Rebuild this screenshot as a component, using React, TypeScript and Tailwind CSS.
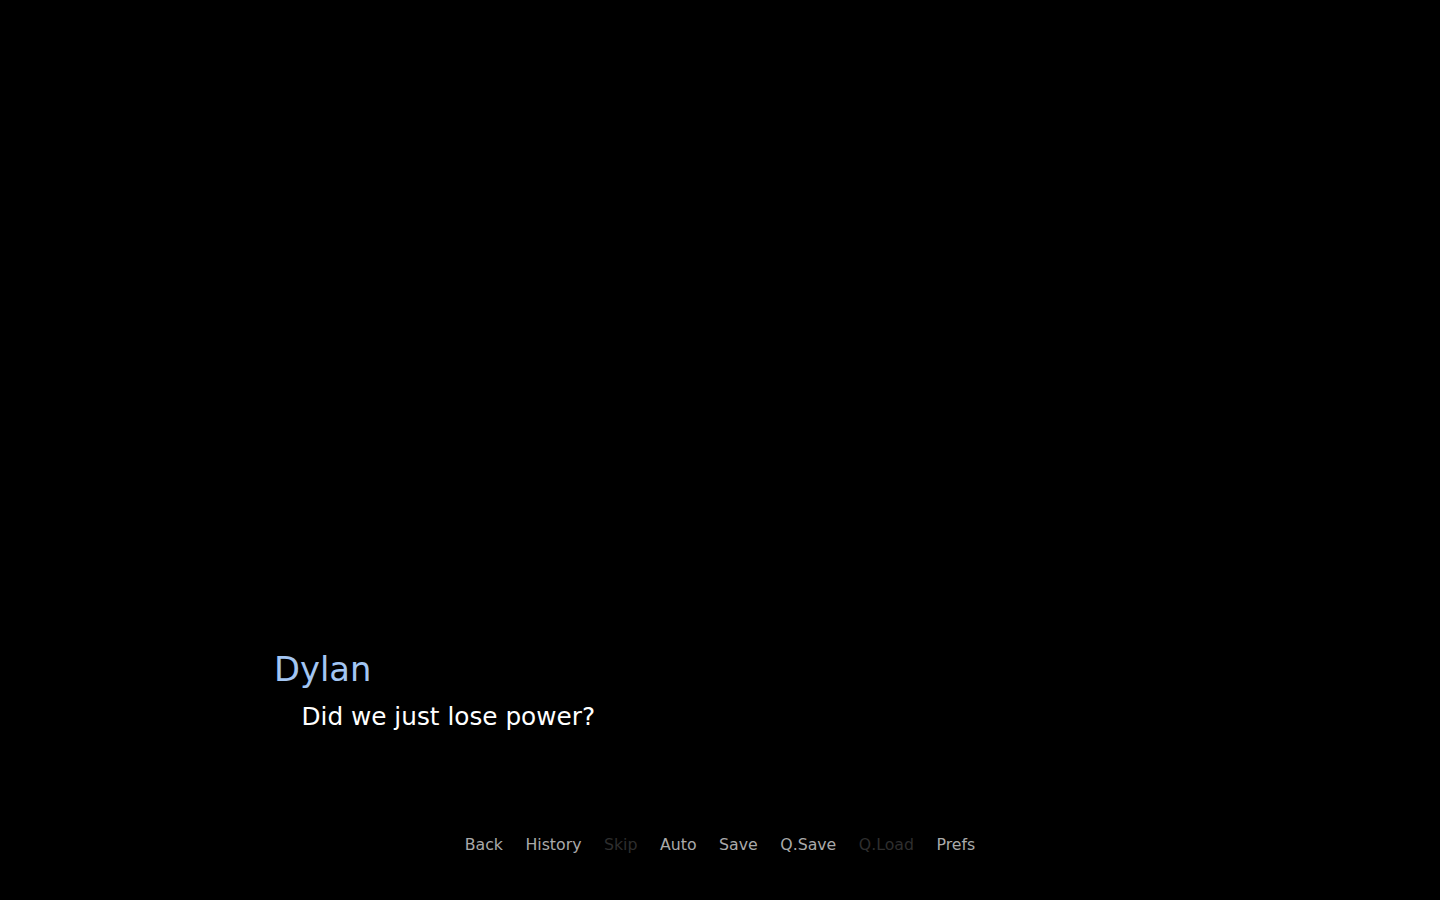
import React from "react";

const items: { label: string; dim?: boolean }[] = [
  { label: "Back" },
  { label: "History" },
  { label: "Skip", dim: true },
  { label: "Auto" },
  { label: "Save" },
  { label: "Q.Save" },
  { label: "Q.Load", dim: true },
  { label: "Prefs" },
];

export default function App() {
  return (
    <div className="w-[1440px] h-[900px] bg-black overflow-hidden font-['DejaVu_Sans',sans-serif] flex flex-col">
      <div className="pt-[650px] pl-[274px] text-[33.75px] leading-[39.3px] text-[#a3c6f3] whitespace-nowrap">
        Dylan
      </div>
      <div className="mt-[13.7px] pl-[301.5px] text-[24.75px] leading-[28.8px] text-white whitespace-nowrap">
        Did we just lose power?
      </div>
      <div className="mt-[104px] flex justify-center text-[15.75px] leading-[18.3px]">
        {items.map((it) => (
          <span
            key={it.label}
            className={
              it.dim
                ? "px-[11.25px] text-[#2e2e2e] whitespace-nowrap"
                : "px-[11.25px] text-[#aaaaaa] whitespace-nowrap"
            }
          >
            {it.label}
          </span>
        ))}
      </div>
    </div>
  );
}
